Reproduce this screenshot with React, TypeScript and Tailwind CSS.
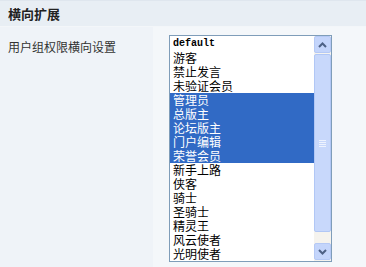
import React from "react";

const groups = [
  { name: "default", selected: false, mono: true },
  { name: "游客", selected: false },
  { name: "禁止发言", selected: false },
  { name: "未验证会员", selected: false },
  { name: "管理员", selected: true },
  { name: "总版主", selected: true },
  { name: "论坛版主", selected: true },
  { name: "门户编辑", selected: true },
  { name: "荣誉会员", selected: true },
  { name: "新手上路", selected: false },
  { name: "侠客", selected: false },
  { name: "骑士", selected: false },
  { name: "圣骑士", selected: false },
  { name: "精灵王", selected: false },
  { name: "风云使者", selected: false },
  { name: "光明使者", selected: false },
];

const cjk = "font-['SimSun','Noto_Sans_CJK_SC',sans-serif]";

const App: React.FC = () => {
  return (
    <div className={`w-[366px] h-[267px] overflow-hidden bg-[#f4f7fa] ${cjk}`}>
      {/* Title */}
      <div className="h-[27px] border-t border-[#dfe6ee] border-b border-b-[#f3f6f9] bg-[#e8eef4] flex items-center px-2">
        <span className="text-[13px] font-bold text-[#222] leading-none">横向扩展</span>
      </div>

      {/* Row */}
      <div className="flex h-[240px]">
        <div className="w-[153px] bg-[#eff3f8] pl-2 pt-[6px]">
          <span className="text-[12px] text-[#333] leading-[16px]">用户组权限横向设置</span>
        </div>
        <div className="flex-1 pl-4 pt-2">
          <div className="w-[163px] h-[227px] border border-[#7f9db9] bg-white flex">
            {/* Options */}
            <div className="flex-1 pt-px">
              {groups.map((g) => (
                <div
                  key={g.name}
                  className={`h-[14px] flex items-center pl-[3px] text-[12px] leading-[14px] ${
                    g.selected ? "bg-[#316ac5] text-white" : "text-black"
                  }`}
                >
                  {g.mono ? (
                    <span className="font-['Liberation_Mono',monospace] text-[10px] font-bold">{g.name}</span>
                  ) : (
                    g.name
                  )}
                </div>
              ))}
            </div>

            {/* Scrollbar */}
            <div className="w-[17px] flex flex-col bg-[#f5f3ee] pb-px">
              <div className="h-[17px] rounded-[2px] border border-[#b5c9f5] bg-[#c4d5fb] flex items-center justify-center">
                <svg width="9" height="6" viewBox="0 0 9 6">
                  <path d="M1 5 L4.5 1.5 L8 5" fill="none" stroke="#4d6185" strokeWidth="2" />
                </svg>
              </div>
              <div className="h-[178px] mt-px rounded-[2px] border border-[#b1c7f5] bg-[#c8d8fb] flex items-center justify-center">
                <div className="flex flex-col gap-px">
                  <div className="w-[7px] h-px bg-[#eef3fe]" />
                  <div className="w-[7px] h-px bg-[#eef3fe]" />
                  <div className="w-[7px] h-px bg-[#eef3fe]" />
                  <div className="w-[7px] h-px bg-[#eef3fe]" />
                </div>
              </div>
              <div className="flex-1" />
              <div className="h-[17px] rounded-[2px] border border-[#b5c9f5] bg-[#c4d5fb] flex items-center justify-center">
                <svg width="9" height="6" viewBox="0 0 9 6">
                  <path d="M1 1 L4.5 4.5 L8 1" fill="none" stroke="#4d6185" strokeWidth="2" />
                </svg>
              </div>
            </div>
          </div>
        </div>
      </div>
    </div>
  );
};

export default App;
